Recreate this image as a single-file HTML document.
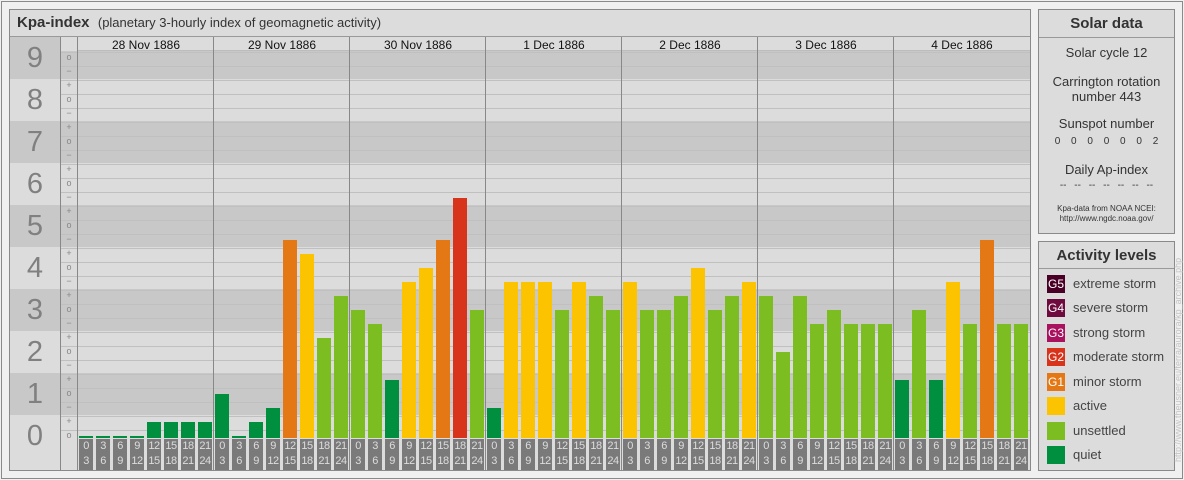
<!DOCTYPE html>
<html><head><meta charset="utf-8"><style>
*{margin:0;padding:0;box-sizing:border-box}
body{width:1184px;height:480px;background:#f0f0f0;font-family:"Liberation Sans",sans-serif;position:relative;overflow:hidden}
.a{position:absolute}
#frame{left:1px;top:1px;width:1182px;height:478px;border:1px solid #8a8a8a}
#main{left:9px;top:9px;width:1022px;height:462px;border:1px solid #8a8a8a;background:#dcdcdc}
.tt{font-size:15px;color:#333}
.num{font-size:29px;color:#808080;width:50px;text-align:center;left:10px}
.tick{font-size:9px;color:#888;width:16px;text-align:center;left:61px}
.hl{left:61px;width:969px;height:1px;background:#c0c0c0}
.vl{width:1px;background:#888}
.bar{width:14px}
.lab{width:14px;height:31px;top:439px;background:#7a7a7a;color:#ddd;font-size:11px;line-height:15px;text-align:center;letter-spacing:-0.5px}
.day{font-size:12px;color:#111;width:136px;text-align:center;top:38px}
.box{border:1px solid #8a8a8a;background:#dcdcdc;left:1038px;width:137px}
.bt{height:28px;border-bottom:1px solid #999;font-weight:bold;font-size:15px;color:#333;text-align:center;line-height:28px}
.sd{font-size:13px;color:#333;text-align:center;width:135px;left:0}
.lg{left:8px;width:18px;height:18px;color:#fff;font-size:12px;line-height:18px;text-align:center}
.lt{left:34px;font-size:13px;color:#444}
</style></head><body>
<div class="a" id="frame"></div>
<div class="a" id="main"></div>
<div id="g"></div>
<div class="a" style="left:10px;top:10px;width:1020px;height:27px;border-bottom:1px solid #999"></div>
<div class="a tt" style="left:17px;top:14px"><b>Kpa-index</b>&nbsp; <span style="font-size:13px">(planetary 3-hourly index of geomagnetic activity)</span></div>
<div class="a box" style="top:9px;height:225px">
<div class="bt">Solar data</div>
<div class="a sd" style="top:35px">Solar cycle 12</div>
<div class="a sd" style="top:64px;line-height:15px">Carrington rotation<br>number 443</div>
<div class="a sd" style="top:106px">Sunspot number</div>
<div class="a sd" style="top:126px;font-size:10px;word-spacing:8px">0 0 0 0 0 0 2</div>
<div class="a sd" style="top:152px">Daily Ap-index</div>
<div class="a sd" style="top:170px;font-size:10px;word-spacing:5px">-- -- -- -- -- -- --</div>
<div class="a sd" style="top:194px;font-size:8px;line-height:10px">Kpa-data from NOAA NCEI:<br>http://www.ngdc.noaa.gov/</div>
</div>
<div class="a box" style="top:241px;height:230px">
<div class="bt" style="height:27px">Activity levels</div>
<div class="a lg" style="top:33px;background:#4a0026">G5</div><div class="a lt" style="top:34px">extreme storm</div>
<div class="a lg" style="top:57px;background:#6e0a3e">G4</div><div class="a lt" style="top:58px">severe storm</div>
<div class="a lg" style="top:82px;background:#a8125e">G3</div><div class="a lt" style="top:83px">strong storm</div>
<div class="a lg" style="top:106px;background:#d8341c">G2</div><div class="a lt" style="top:107px">moderate storm</div>
<div class="a lg" style="top:131px;background:#e47814">G1</div><div class="a lt" style="top:132px">minor storm</div>
<div class="a lg" style="top:155px;background:#fcc400"></div><div class="a lt" style="top:156px">active</div>
<div class="a lg" style="top:180px;background:#7cbe21"></div><div class="a lt" style="top:181px">unsettled</div>
<div class="a lg" style="top:204px;background:#008f3f"></div><div class="a lt" style="top:205px">quiet</div>
</div>
<div class="a" style="left:1173px;top:462px;transform:rotate(-90deg);transform-origin:0 0;font-size:9px;color:#c4c4c4;white-space:nowrap;width:220px">http://www.theusner.eu/terra/aurora/kp_archive.php</div>
<script>
(function(){
var h='';
for(var n=0;n<=9;n++){var yt=415-42*n,yb=yt+42;if(n==0)yb=437;if(yt<37)yt=37;
var c=n%2?'#c8c8c8':'#dcdcdc';
h+='<div class="a" style="left:10px;top:'+yt+'px;width:1020px;height:'+(yb-yt)+'px;background:'+c+'"></div>';
h+='<div class="a num" style="top:'+(437-42*n-17)+'px">'+n+'</div>';}
for(var y=38;y<=430;y+=14)h+='<div class="a hl" style="top:'+y+'px"></div>';
for(var t=0;t<=28;t++){var y2=436-14*t;if(y2<40)continue;h+='<div class="a tick" style="top:'+(y2-6)+'px">'+['o','+','\u2212'][t%3]+'</div>';}
h+='<div class="a" style="left:78px;top:37px;width:952px;height:14px;background:#dcdcdc;border-bottom:1px solid #bcbcbc"></div>';
h+='<div class="a" style="left:61px;top:37px;width:17px;height:14px;background:#dcdcdc"></div>';
h+='<div class="a vl" style="left:60px;top:37px;height:434px"></div><div class="a vl" style="left:77px;top:37px;height:434px"></div>';
var days=['28 Nov 1886','29 Nov 1886','30 Nov 1886','1 Dec 1886','2 Dec 1886','3 Dec 1886','4 Dec 1886'];
var Q='#008f3f',U='#7cbe21',A='#fcc400',G1='#e47814',G2='#d8341c';
var d=[[0,Q,0,Q,0,Q,0,Q,1,Q,1,Q,1,Q,1,Q],[3,Q,0,Q,1,Q,2,Q,14,G1,13,A,7,U,10,U],[9,U,8,U,4,Q,11,A,12,A,14,G1,17,G2,9,U],[2,Q,11,A,11,A,11,A,9,U,11,A,10,U,9,U],[11,A,9,U,9,U,10,U,12,A,9,U,10,U,11,A],[10,U,6,U,10,U,8,U,9,U,8,U,8,U,8,U],[4,Q,9,U,4,Q,11,A,8,U,14,G1,8,U,8,U]];
var L=['0','3','6','9','12','15','18','21'],R=['3','6','9','12','15','18','21','24'];
for(var i=0;i<7;i++){var x0=78+136*i;
h+='<div class="a day" style="left:'+x0+'px">'+days[i]+'</div>';
if(i>0)h+='<div class="a vl" style="left:'+(x0-1)+'px;top:37px;height:434px"></div>';
for(var j=0;j<8;j++){var x=x0+1+17*j,v=d[i][2*j],bt=436-14*v,ht=438-bt;if(v==0){bt=436;ht=2;}
h+='<div class="a bar" style="left:'+x+'px;top:'+bt+'px;height:'+ht+'px;background:'+d[i][2*j+1]+'"></div>';
h+='<div class="a lab" style="left:'+x+'px">'+L[j]+'<br>'+R[j]+'</div>';}}
document.getElementById('g').innerHTML=h;
})();
</script>
</body></html>
